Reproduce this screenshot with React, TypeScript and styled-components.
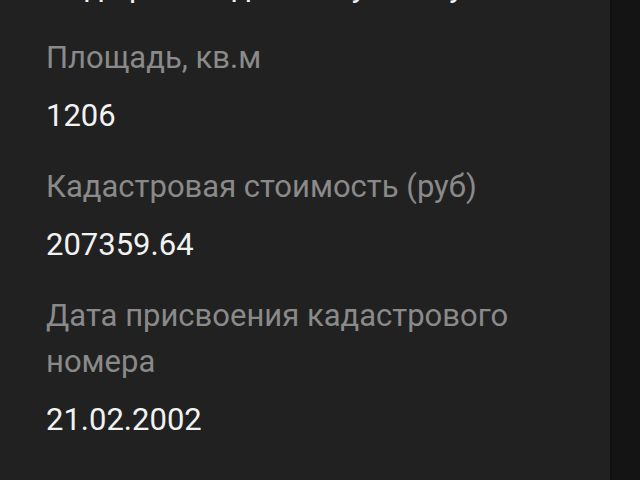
import React from 'react'
import styled, { createGlobalStyle } from 'styled-components'

const GlobalStyle = createGlobalStyle`
	html, body {
		margin: 0;
		padding: 0;
		background: #141414;
	}
	body {
		font-family: Roboto, 'Noto Sans', sans-serif;
	}
`

const Screen = styled.div`
	width: 640px;
	height: 480px;
	display: flex;
	overflow: hidden;
	background: #141414;
`

const Panel = styled.div`
	width: 610px;
	flex: none;
	background: #212121;
	box-shadow: 1px 0 2px rgba(0, 0, 0, 0.35);
	overflow: hidden;
`

// the list is scrolled a little, so the first value is cut at the top
const FieldList = styled.dl`
	margin: -36px 0 0;
	padding: 0 40px 0 46px;
	display: flex;
	flex-direction: column;
	gap: 25px;
`

const Field = styled.div`
	display: flex;
	flex-direction: column;
	gap: 12px;
`

const Label = styled.dt`
	margin: 0;
	font-size: 31px;
	line-height: 46px;
	color: #8a8a8a;
`

const Value = styled.dd`
	margin: 0;
	font-size: 31px;
	line-height: 46px;
	color: #f2f2f2;
	white-space: nowrap;
`

const fields = [
	{ label: 'Разрешенное использование', value: 'Под производственную базу' },
	{ label: 'Площадь, кв.м', value: '1206' },
	{ label: 'Кадастровая стоимость (руб)', value: '207359.64' },
	{ label: 'Дата присвоения кадастрового номера', value: '21.02.2002' },
]

export default function App() {
	return (
		<>
			<GlobalStyle />
			<Screen>
				<Panel>
					<FieldList>
						{fields.map((f, i) => (
							<Field key={f.label}>
								{i > 0 && <Label>{f.label}</Label>}
								<Value>{f.value}</Value>
							</Field>
						))}
					</FieldList>
				</Panel>
			</Screen>
		</>
	)
}
